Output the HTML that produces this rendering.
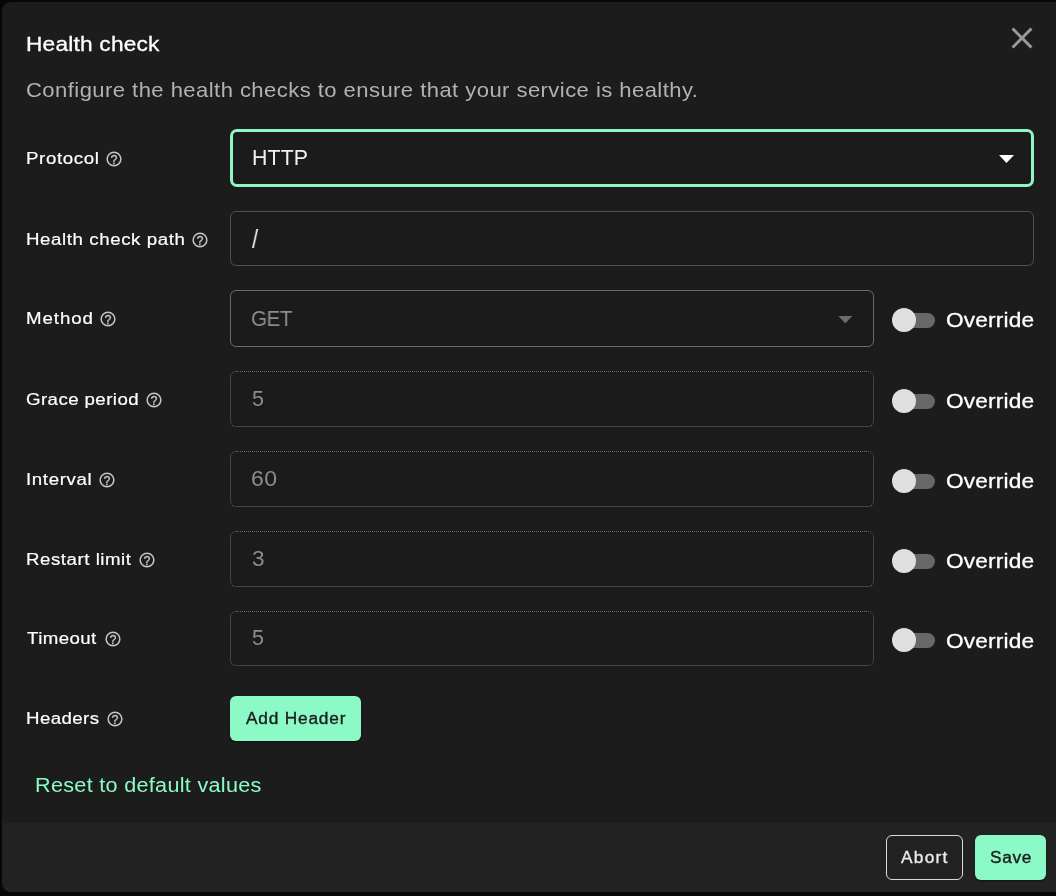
<!DOCTYPE html>
<html lang="en">
<head>
<meta charset="utf-8">
<title>Health check</title>
<style>
*{box-sizing:border-box;margin:0;padding:0}
html,body{width:1056px;height:896px;overflow:hidden;background:#070707;font-family:"Liberation Sans",sans-serif;color:#fff}
.abs{position:absolute}
#modal{position:absolute;left:2px;top:2px;width:1070px;height:890px;background:#1c1c1c;border-radius:9px}
#footer{position:absolute;left:2px;top:823px;width:1070px;height:69px;background:#222222;border-radius:0 0 9px 9px}
.t{position:absolute;white-space:pre;line-height:1;transform-origin:0 0;will-change:transform}
.field{position:absolute;left:230px;border:1px solid #505050;border-radius:6px;background:#1b1b1b}
.dot{border:1px dotted #6e6e6e}
.btn{position:absolute;border-radius:6px}
</style>
</head>
<body>
<div id="modal"></div>
<div id="footer"></div>
<svg class="abs" style="left:1004px;top:20px" width="36" height="36" viewBox="0 0 24 24"><path fill="#9a9a9a" d="M19 6.41L17.59 5 12 10.59 6.41 5 5 6.41 10.59 12 5 17.59 6.41 19 12 13.41 17.59 19 19 17.59 13.41 12z"/></svg>
<div class="field" style="left:230px;top:129px;width:804px;height:58px;border:3px solid #8cf8c5;border-radius:7px"></div>
<svg class="abs" style="left:998.6px;top:154.5px" width="15" height="8" viewBox="0 0 15 8"><path d="M0 0H15L7.5 8Z" fill="#fff"/></svg>
<div class="field" style="top:211px;width:804px;height:55px"></div>
<div class="field" style="top:290px;width:644px;height:57px;border-color:#6a6a6a"></div>
<svg class="abs" style="left:837.7px;top:316px" width="14.6" height="7.4" viewBox="0 0 15 8"><path d="M0 0H15L7.5 8Z" fill="#6b6b6b"/></svg>
<div class="field dot" style="top:371px;width:644px;height:56px"></div>
<div class="field dot" style="top:451px;width:644px;height:56px"></div>
<div class="field dot" style="top:531px;width:644px;height:56px"></div>
<div class="field dot" style="top:610.5px;width:644px;height:55.5px"></div>
<div class="abs" style="left:897px;top:313px;width:38px;height:14.5px;border-radius:8px;background:#686868"></div><div class="abs" style="left:892px;top:308px;width:24px;height:24px;border-radius:50%;background:#e0e0e0"></div>
<div class="abs" style="left:897px;top:394px;width:38px;height:14.5px;border-radius:8px;background:#686868"></div><div class="abs" style="left:892px;top:389px;width:24px;height:24px;border-radius:50%;background:#e0e0e0"></div>
<div class="abs" style="left:897px;top:474px;width:38px;height:14.5px;border-radius:8px;background:#686868"></div><div class="abs" style="left:892px;top:469px;width:24px;height:24px;border-radius:50%;background:#e0e0e0"></div>
<div class="abs" style="left:897px;top:554px;width:38px;height:14.5px;border-radius:8px;background:#686868"></div><div class="abs" style="left:892px;top:549px;width:24px;height:24px;border-radius:50%;background:#e0e0e0"></div>
<div class="abs" style="left:897px;top:633px;width:38px;height:14.5px;border-radius:8px;background:#686868"></div><div class="abs" style="left:892px;top:628px;width:24px;height:24px;border-radius:50%;background:#e0e0e0"></div>
<div class="btn" style="left:230px;top:696px;width:131px;height:45px;background:#8cfac7;box-shadow:0 1px 2px rgba(0,0,0,.5)"></div>
<div class="btn" style="left:886px;top:835px;width:77px;height:45px;border:1px solid #dcdcdc"></div>
<div class="btn" style="left:975px;top:835px;width:71px;height:45px;background:#8cfac7;box-shadow:0 1px 2px rgba(0,0,0,.5)"></div>
<svg class="abs" style="left:105.0px;top:150.0px;will-change:transform" width="18" height="18" viewBox="0 0 18 18"><circle cx="9" cy="9" r="6.85" fill="none" stroke="#c6c6c6" stroke-width="1.5"/><text x="9" y="13.5" text-anchor="middle" font-family="Liberation Sans, sans-serif" font-weight="400" font-size="12.5" stroke="#c6c6c6" stroke-width="0.3" fill="#c6c6c6">?</text></svg>
<svg class="abs" style="left:191.0px;top:231.0px;will-change:transform" width="18" height="18" viewBox="0 0 18 18"><circle cx="9" cy="9" r="6.85" fill="none" stroke="#c6c6c6" stroke-width="1.5"/><text x="9" y="13.5" text-anchor="middle" font-family="Liberation Sans, sans-serif" font-weight="400" font-size="12.5" stroke="#c6c6c6" stroke-width="0.3" fill="#c6c6c6">?</text></svg>
<svg class="abs" style="left:99.2px;top:310.1px;will-change:transform" width="18" height="18" viewBox="0 0 18 18"><circle cx="9" cy="9" r="6.85" fill="none" stroke="#c6c6c6" stroke-width="1.5"/><text x="9" y="13.5" text-anchor="middle" font-family="Liberation Sans, sans-serif" font-weight="400" font-size="12.5" stroke="#c6c6c6" stroke-width="0.3" fill="#c6c6c6">?</text></svg>
<svg class="abs" style="left:145.0px;top:391.2px;will-change:transform" width="18" height="18" viewBox="0 0 18 18"><circle cx="9" cy="9" r="6.85" fill="none" stroke="#c6c6c6" stroke-width="1.5"/><text x="9" y="13.5" text-anchor="middle" font-family="Liberation Sans, sans-serif" font-weight="400" font-size="12.5" stroke="#c6c6c6" stroke-width="0.3" fill="#c6c6c6">?</text></svg>
<svg class="abs" style="left:98.0px;top:471.2px;will-change:transform" width="18" height="18" viewBox="0 0 18 18"><circle cx="9" cy="9" r="6.85" fill="none" stroke="#c6c6c6" stroke-width="1.5"/><text x="9" y="13.5" text-anchor="middle" font-family="Liberation Sans, sans-serif" font-weight="400" font-size="12.5" stroke="#c6c6c6" stroke-width="0.3" fill="#c6c6c6">?</text></svg>
<svg class="abs" style="left:138.0px;top:551.2px;will-change:transform" width="18" height="18" viewBox="0 0 18 18"><circle cx="9" cy="9" r="6.85" fill="none" stroke="#c6c6c6" stroke-width="1.5"/><text x="9" y="13.5" text-anchor="middle" font-family="Liberation Sans, sans-serif" font-weight="400" font-size="12.5" stroke="#c6c6c6" stroke-width="0.3" fill="#c6c6c6">?</text></svg>
<svg class="abs" style="left:104.2px;top:630.1px;will-change:transform" width="18" height="18" viewBox="0 0 18 18"><circle cx="9" cy="9" r="6.85" fill="none" stroke="#c6c6c6" stroke-width="1.5"/><text x="9" y="13.5" text-anchor="middle" font-family="Liberation Sans, sans-serif" font-weight="400" font-size="12.5" stroke="#c6c6c6" stroke-width="0.3" fill="#c6c6c6">?</text></svg>
<svg class="abs" style="left:106.0px;top:710.1px;will-change:transform" width="18" height="18" viewBox="0 0 18 18"><circle cx="9" cy="9" r="6.85" fill="none" stroke="#c6c6c6" stroke-width="1.5"/><text x="9" y="13.5" text-anchor="middle" font-family="Liberation Sans, sans-serif" font-weight="400" font-size="12.5" stroke="#c6c6c6" stroke-width="0.3" fill="#c6c6c6">?</text></svg>
<div class="t" id="title" style="left:26.00px;top:33.00px;font-size:21px;letter-spacing:0.197px;color:#ffffff;-webkit-text-stroke:0.3px #ffffff;transform:scaleX(1.08)">Health check</div>
<div class="t" id="sub" style="left:26.00px;top:79.00px;font-size:21px;letter-spacing:0.416px;color:#b2b2b2;transform:scaleX(1.05)">Configure the health checks to ensure that your service is healthy.</div>
<div class="t" id="l1" style="left:26.00px;top:150.00px;font-size:17.3px;letter-spacing:0.571px;color:#ffffff;-webkit-text-stroke:0.2px #ffffff;transform:scaleX(1.08)">Protocol</div>
<div class="t" id="l2" style="left:26.00px;top:231.00px;font-size:17.3px;letter-spacing:0.552px;color:#ffffff;-webkit-text-stroke:0.2px #ffffff;transform:scaleX(1.08)">Health check path</div>
<div class="t" id="l3" style="left:26.00px;top:310.00px;font-size:17.3px;letter-spacing:0.867px;color:#ffffff;-webkit-text-stroke:0.2px #ffffff;transform:scaleX(1.08)">Method</div>
<div class="t" id="l4" style="left:26.00px;top:391.00px;font-size:17.3px;letter-spacing:0.394px;color:#ffffff;-webkit-text-stroke:0.2px #ffffff;transform:scaleX(1.08)">Grace period</div>
<div class="t" id="l5" style="left:26.00px;top:471.00px;font-size:17.3px;letter-spacing:0.595px;color:#ffffff;-webkit-text-stroke:0.2px #ffffff;transform:scaleX(1.08)">Interval</div>
<div class="t" id="l6" style="left:26.00px;top:551.00px;font-size:17.3px;letter-spacing:0.500px;color:#ffffff;-webkit-text-stroke:0.2px #ffffff;transform:scaleX(1.08)">Restart limit</div>
<div class="t" id="l7" style="left:27.00px;top:630.00px;font-size:17.3px;letter-spacing:0.389px;color:#ffffff;-webkit-text-stroke:0.2px #ffffff;transform:scaleX(1.08)">Timeout</div>
<div class="t" id="l8" style="left:26.00px;top:710.00px;font-size:17.3px;letter-spacing:0.389px;color:#ffffff;-webkit-text-stroke:0.2px #ffffff;transform:scaleX(1.08)">Headers</div>
<div class="t" id="v1" style="left:252.00px;top:148.00px;font-size:21.3px;letter-spacing:0.120px;color:#f2f2f2;transform:scaleX(1.0)">HTTP</div>
<div class="t" id="v2" style="left:251.50px;top:226.00px;font-size:26px;letter-spacing:0.000px;color:#f2f2f2;transform:scaleX(0.85)">/</div>
<div class="t" id="v3" style="left:251.00px;top:309.00px;font-size:21.3px;letter-spacing:-0.557px;color:#8c8c8c;transform:scaleX(0.97)">GET</div>
<div class="t" id="v4" style="left:252.00px;top:389.00px;font-size:21.5px;letter-spacing:0.000px;color:#8c8c8c;transform:scaleX(1.0)">5</div>
<div class="t" id="v5" style="left:250.50px;top:469.00px;font-size:21.5px;letter-spacing:0.336px;color:#8c8c8c;transform:scaleX(1.07)">60</div>
<div class="t" id="v6" style="left:252.00px;top:549.00px;font-size:21.5px;letter-spacing:0.000px;color:#8c8c8c;transform:scaleX(1.05)">3</div>
<div class="t" id="v7" style="left:252.00px;top:628.00px;font-size:21.5px;letter-spacing:0.000px;color:#8c8c8c;transform:scaleX(1.0)">5</div>
<div class="t" id="o3" style="left:945.50px;top:309.00px;font-size:21px;letter-spacing:0.143px;color:#ffffff;-webkit-text-stroke:0.3px #ffffff;transform:scaleX(1.08)">Override</div>
<div class="t" id="o4" style="left:945.50px;top:390.00px;font-size:21px;letter-spacing:0.143px;color:#ffffff;-webkit-text-stroke:0.3px #ffffff;transform:scaleX(1.08)">Override</div>
<div class="t" id="o5" style="left:945.50px;top:470.00px;font-size:21px;letter-spacing:0.143px;color:#ffffff;-webkit-text-stroke:0.3px #ffffff;transform:scaleX(1.08)">Override</div>
<div class="t" id="o6" style="left:945.50px;top:550.00px;font-size:21px;letter-spacing:0.143px;color:#ffffff;-webkit-text-stroke:0.3px #ffffff;transform:scaleX(1.08)">Override</div>
<div class="t" id="o7" style="left:945.50px;top:630.00px;font-size:21px;letter-spacing:0.143px;color:#ffffff;-webkit-text-stroke:0.3px #ffffff;transform:scaleX(1.08)">Override</div>
<div class="t" id="b1" style="left:245.50px;top:711.00px;font-size:16px;letter-spacing:0.741px;color:#1c1c1c;-webkit-text-stroke:0.35px #1c1c1c;transform:scaleX(1.08)">Add Header</div>
<div class="t" id="reset" style="left:35.00px;top:775.00px;font-size:20px;letter-spacing:0.280px;color:#8cfac7;transform:scaleX(1.08)">Reset to default values</div>
<div class="t" id="b2" style="left:900.50px;top:850.00px;font-size:16px;letter-spacing:1.167px;color:#ececec;-webkit-text-stroke:0.3px #ececec;transform:scaleX(1.08)">Abort</div>
<div class="t" id="b3" style="left:989.50px;top:850.00px;font-size:16px;letter-spacing:0.611px;color:#1c1c1c;-webkit-text-stroke:0.35px #1c1c1c;transform:scaleX(1.08)">Save</div>
</body>
</html>
